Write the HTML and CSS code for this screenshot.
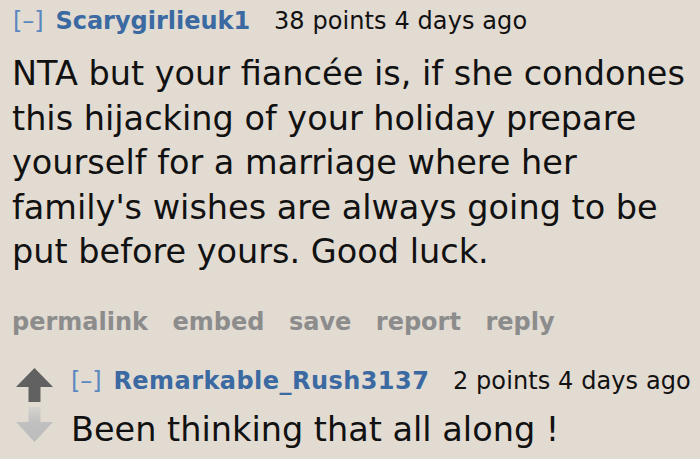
FILE: index.html
```html
<!DOCTYPE html>
<html>
<head>
<meta charset="utf-8">
<link rel="stylesheet" href="styles.css">
</head>
<body>
<div class="page">
  <div class="comment">
    <div class="tagline">
      <span class="expand">[–]</span>
      <span class="author">Scarygirlieuk1</span>
      <span class="score">38 points 4 days ago</span>
    </div>
    <div class="body">NTA but your fiancée is, if she condones this hijacking of your holiday prepare yourself for a marriage where her family's wishes are always going to be put before yours. Good luck.</div>
    <div class="buttons">
      <span>permalink</span><span>embed</span><span>save</span><span>report</span><span>reply</span>
    </div>
  </div>
  <div class="child">
    <div class="votes">
      <svg class="arrow" width="37" height="34" viewBox="0 0 37 34"><path d="M18.5 0 L37 19 L24.5 19 L24.5 34 L12.5 34 L12.5 19 L0 19 Z" fill="#616161"/></svg>
      <svg class="arrow" width="37" height="35" viewBox="0 0 37 35"><defs><linearGradient id="dg" x1="0" y1="0" x2="0" y2="1"><stop offset="0" stop-color="#d6d3cf"/><stop offset="0.45" stop-color="#c0c0c0"/><stop offset="1" stop-color="#bcbcbc"/></linearGradient></defs><path d="M12.5 0 L24.5 0 L24.5 15 L37 15 L18.5 35 L0 15 L12.5 15 Z" fill="url(#dg)"/></svg>
    </div>
    <div class="child-main">
      <div class="tagline">
        <span class="expand">[–]</span>
        <span class="author wide">Remarkable_Rush3137</span>
        <span class="score">2 points 4 days ago</span>
      </div>
      <div class="body small">Been thinking that all along !</div>
    </div>
  </div>
</div>
</body>
</html>
```
FILE: styles.css
```css
html, body {
  margin: 0;
  padding: 0;
  background: #e2dbd2;
}
.page {
  width: 700px;
  height: 459px;
  overflow: hidden;
  font-family: "DejaVu Sans", Verdana, sans-serif;
  color: #111;
}
.comment {
  padding: 5px 0 0 13px;
}
.tagline {
  font-size: 24px;
  line-height: 32px;
  white-space: nowrap;
}
.expand {
  color: #5b88c0;
  margin-right: 4px;
}
.author {
  color: #3b69a1;
  font-weight: bold;
  margin-right: 16px;
}
.author.wide {
  letter-spacing: 0.45px;
}
.score {
  color: #111;
  letter-spacing: 0.1px;
}
.body {
  font-size: 33.5px;
  line-height: 44.5px;
  margin-top: 15px;
  width: 690px;
  margin-left: -1px;
}
.buttons {
  display: flex;
  gap: 24.5px;
  margin-top: 31px;
  margin-left: -1px;
  font-size: 24px;
  line-height: 32px;
  font-weight: bold;
  color: #8c8c8c;
}
.child {
  display: flex;
  gap: 20px;
  padding: 27px 0 0 16px;
}
.votes {
  display: flex;
  flex-direction: column;
  gap: 5px;
  padding-top: 3px;
}
.child-main {
  margin-left: -2px;
}
.child-main .body {
  margin-top: 11.5px;
  margin-left: 0;
}
```
